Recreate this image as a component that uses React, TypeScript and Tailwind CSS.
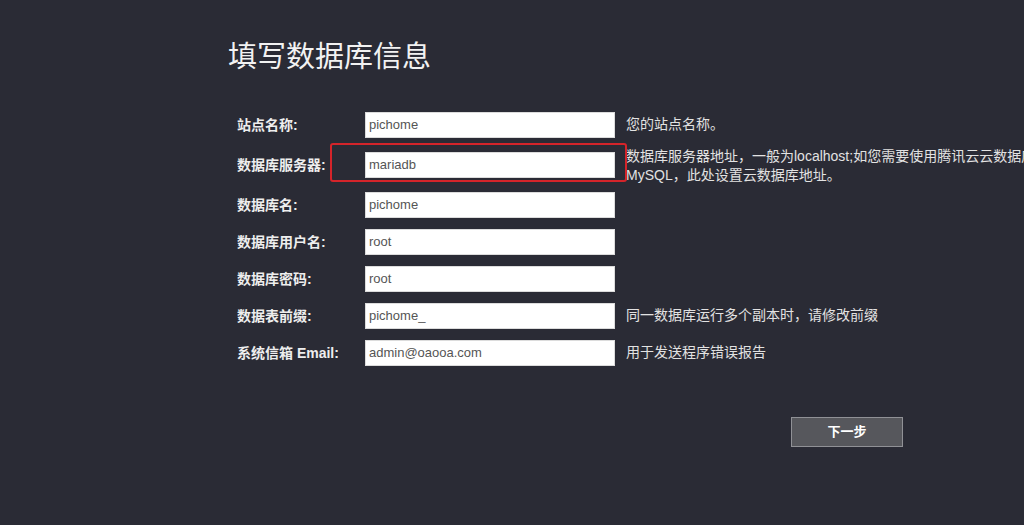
import React from "react";

type Field = {
  label: string;
  value: string;
  help?: React.ReactNode;
  rowH: string;
  marked?: boolean;
};

const fields: Field[] = [
  {label: "站点名称:", value: "pichome", help: "您的站点名称。", rowH: "h-[40px]"},
  {
    label: "数据库服务器:",
    value: "mariadb",
    help: (
      <>
        数据库服务器地址，一般为localhost;如您需要使用腾讯云云数据库
        <br />
        MySQL，此处设置云数据库地址。
      </>
    ),
    rowH: "h-[40px]",
    marked: true,
  },
  {label: "数据库名:", value: "pichome", rowH: "h-[37px]"},
  {label: "数据库用户名:", value: "root", rowH: "h-[37px]"},
  {label: "数据库密码:", value: "root", rowH: "h-[37px]"},
  {
    label: "数据表前缀:",
    value: "pichome_",
    help: "同一数据库运行多个副本时，请修改前缀",
    rowH: "h-[37px]",
  },
  {
    label: "系统信箱 Email:",
    value: "admin@oaooa.com",
    help: "用于发送程序错误报告",
    rowH: "h-[37px]",
  },
];

export default function App() {
  return (
    <div className="w-[1024px] h-[525px] overflow-hidden bg-[#2a2b35] font-['Liberation_Sans','Noto_Sans_CJK_SC',sans-serif]">
      <div className="pl-[228px] pt-[38px] w-[903px]">
        <h1 className="text-[29px] leading-[38px] text-[#f2f2f2] font-normal">
          填写数据库信息
        </h1>

        <div className="mt-[29px] pl-[9px] flex flex-col">
          {fields.map((f) => (
            <div key={f.label} className={`flex items-start ${f.rowH}`}>
              <div className="w-[128px] shrink-0 h-[26px] mt-[7px] flex items-center text-[14px] font-bold text-[#eeeeee] whitespace-nowrap">
                {f.label}
              </div>
              <div className="relative shrink-0 mt-[7px]">
                <div className="w-[250px] h-[26px] bg-white border border-[#dcdcdc] pl-[3px] flex items-center text-[13px] text-[#555555]">
                  {f.value}
                </div>
                {f.marked && (
                  <div className="absolute left-[-35px] top-[-9px] w-[297px] h-[39px] border-[2.5px] border-[#d4242a] rounded-[3px]" />
                )}
              </div>
              {f.help && (
                <div
                  className={`ml-[11px] shrink-0 text-[14px] leading-[19px] text-[#e2e2e2] whitespace-nowrap ${
                    f.marked ? "mt-[2px]" : "mt-[10px]"
                  }`}
                >
                  {f.help}
                </div>
              )}
            </div>
          ))}
        </div>

        <div className="flex justify-end mt-[47px]">
          <button className="w-[112px] h-[30px] bg-[#56575c] border border-[#909196] text-white text-[13px] font-bold flex items-center justify-center">
            下一步
          </button>
        </div>
      </div>
    </div>
  );
}
